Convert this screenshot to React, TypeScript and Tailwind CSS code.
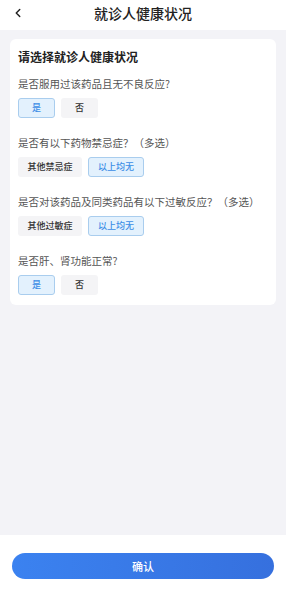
import { ChevronLeft } from 'lucide-react';

const font = { fontFamily: '"Noto Sans CJK SC", "Noto Sans", sans-serif' };

type Opt = { label: string; on?: boolean; w: string };

function Options({ items }: { items: Opt[] }) {
  return (
    <div className="flex gap-[6px]">
      {items.map((o) => (
        <div
          key={o.label}
          className={`flex h-[20px] items-center justify-center rounded-[3px] text-[9px] font-medium ${o.w} ${
            o.on
              ? 'border border-[#a9cdee] bg-[#e3f1fd] text-[#3c8de6]'
              : 'border border-transparent bg-[#f4f4f6] text-[#333]'
          }`}
        >
          {o.label}
        </div>
      ))}
    </div>
  );
}

export default function App() {
  const questions: { q: string; opts: Opt[]; mt: string }[] = [
    { q: '是否服用过该药品且无不良反应?', mt: 'mt-[12px]', opts: [{ label: '是', on: true, w: 'w-[37px]' }, { label: '否', w: 'w-[37px]' }] },
    { q: '是否有以下药物禁忌症？（多选）', mt: 'mt-[18px]', opts: [{ label: '其他禁忌症', w: 'w-[64px]' }, { label: '以上均无', on: true, w: 'w-[56px]' }] },
    { q: '是否对该药品及同类药品有以下过敏反应？（多选）', mt: 'mt-[18px]', opts: [{ label: '其他过敏症', w: 'w-[64px]' }, { label: '以上均无', on: true, w: 'w-[56px]' }] },
    { q: '是否肝、肾功能正常?', mt: 'mt-[18px]', opts: [{ label: '是', on: true, w: 'w-[37px]' }, { label: '否', w: 'w-[37px]' }] },
  ];

  return (
    <div className="flex h-[600px] w-[286px] flex-col bg-[#f3f3f7]" style={font}>
      {/* 顶部导航 */}
      <div className="relative flex h-[30px] items-center justify-center bg-white pb-[4px]">
        <ChevronLeft className="absolute left-[11px] top-[6px] h-[14px] w-[14px] text-[#222]" strokeWidth={2.5} />
        <span className="text-[14px] font-medium leading-[18px] text-[#222]">就诊人健康状况</span>
      </div>

      {/* 内容 */}
      <div className="flex-1 px-[10px] pt-[9px]">
        <div className="rounded-[6px] bg-white px-[8px] pb-[10px] pt-[10px]">
          <h2 className="text-[12px] font-bold leading-[16px] text-[#222]">请选择就诊人健康状况</h2>
          {questions.map((item) => (
            <div key={item.q} className={item.mt}>
              <p className="mb-[7px] text-[10.5px] leading-[14px] text-[#555]">{item.q}</p>
              <Options items={item.opts} />
            </div>
          ))}
        </div>
      </div>

      {/* 底部按钮 */}
      <div className="flex h-[65px] items-start bg-white px-[12px] pt-[18px]">
        <button className="flex h-[26px] w-full items-center justify-center rounded-full bg-gradient-to-r from-[#3b82f0] to-[#3670de] text-[11px] font-medium text-white">
          确认
        </button>
      </div>
    </div>
  );
}
